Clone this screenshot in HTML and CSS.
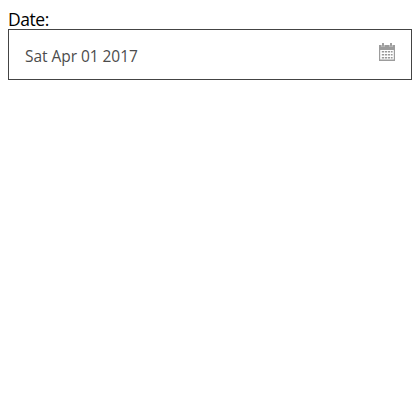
FILE: index.html
```html
<!DOCTYPE html>
<html lang="en">
<head>
<meta charset="utf-8">
<title>Date</title>
<link rel="stylesheet" href="styles.css">
</head>
<body>
<div class="label">Date:</div>
<div class="date-field">
<span class="date-value">Sat Apr 01 2017</span>
<svg class="calendar" width="16" height="18" viewBox="0 0 16 18">
<path fill="#9c9c9c" fill-rule="evenodd" d="M0 2h2.6v1.7h2.8V2h5.2v1.7h2.8V2H16v16H0zM1.2 7v9.6h13.6V7z"/>
<path fill="#a0a0a0" d="M3 0h2v3.7H3zM11 0h2v3.7h-2z"/>
<path fill="#999" d="M2.8 8h2.2v1.4H2.8zM5.8 8H8v1.4H5.8zM8.8 8H11v1.4H8.8zM11.8 8h1.8v1.4h-1.8zM2.8 11h2.2v1.4H2.8zM5.8 11H8v1.4H5.8zM8.8 11H11v1.4H8.8zM11.8 11h1.8v1.4h-1.8zM2.8 14h2.2v1.4H2.8zM5.8 14H8v1.4H5.8zM8.8 14H11v1.4H8.8zM11.8 14h1.8v1.4h-1.8z"/>
</svg>
</div>
</body>
</html>
```
FILE: styles.css
```css
body {
  margin: 8px;
  background: #fff;
  font-family: "Open Sans", "Noto Sans", sans-serif;
}
.label {
  height: 21px;
  line-height: 23px;
  font-size: 17.5px;
  letter-spacing: -0.45px;
  color: #000;
}
.date-field {
  box-sizing: border-box;
  height: 51px;
  border: 1px solid #444;
  padding: 0 16px;
  display: flex;
  align-items: center;
  justify-content: space-between;
}
.date-value {
  padding-top: 2px;
  font-size: 15.5px;
  letter-spacing: -0.05px;
  color: #4c4c4c;
}
.calendar {
  margin-bottom: 5px;
}
```
